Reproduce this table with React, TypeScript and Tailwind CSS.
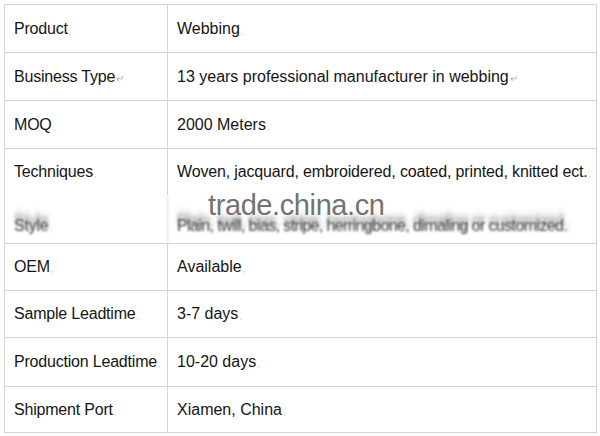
import React from "react";

type Row = { k: string; v: string; h: string; mk?: string; vmk?: string; noLine?: boolean; blur?: boolean };

const rows: Row[] = [
  { k: "Product", v: "Webbing", h: "h-[48px]" },
  { k: "Business Type", v: "13 years professional manufacturer in webbing", h: "h-[48px]", mk: "↵", vmk: "↵" },
  { k: "MOQ", v: "2000 Meters", h: "h-[48px]" },
  { k: "Techniques", v: "Woven, jacquard, embroidered, coated, printed, knitted ect.", h: "h-[47px]", noLine: true },
  { k: "Style", v: "Plain, twill, bias, stripe, herringbone, dimaling or customized.", h: "h-[48px]", blur: true },
  { k: "OEM", v: "Available", h: "h-[47px]" },
  { k: "Sample Leadtime", v: "3-7 days", h: "h-[47px]" },
  { k: "Production Leadtime", v: "10-20 days", h: "h-[49px]" },
  { k: "Shipment Port", v: "Xiamen, China", h: "h-[46px]" },
];

function Mark({ m }: { m?: string }) {
  if (m === "↵") return <span className="text-[10px] text-[#b5b5b5] ml-[1px] relative top-[2px]">↵</span>;
  return <span className="text-[9px] text-[#c4c4c4] ml-[1px] relative top-[3px]">,</span>;
}

const blurCls =
  "blur-[0.8px] text-[#3a3a3a] pt-[12px] [text-shadow:0_-5px_3px_rgba(90,90,90,0.55),0_-9px_4px_rgba(140,140,140,0.35)]";

export default function App() {
  return (
    <div className="w-[600px] h-[436px] bg-white pt-[4px] pl-[4px] font-['Liberation_Sans',Arial,sans-serif] text-[16px] text-[#151515]">
      <div className="relative w-[593px] border-t border-l border-r border-[#d3d3d3]">
        {rows.map((r, i) => (
          <div
            key={i}
            className={`flex ${r.h} ${r.noLine ? "border-b border-b-transparent" : "border-b border-[#d3d3d3]"}`}
          >
            <div className={`w-[163px] shrink-0 border-r border-[#d3d3d3] flex items-center pl-[9px] tracking-[-0.2px] ${r.blur ? blurCls : ""}`}>
              <span>{r.k}</span>
              <Mark m={r.mk} />
            </div>
            <div className={`flex-1 min-w-0 flex items-center pl-[9px] whitespace-nowrap overflow-hidden ${r.blur ? blurCls : ""}`}>
              <span className={i === 3 ? "tracking-[-0.15px]" : r.blur ? "tracking-[-0.6px]" : ""}>{r.v}</span>
              <Mark m={r.vmk} />
            </div>
          </div>
        ))}
        <div className="absolute left-[203px] top-[186px] text-[29px] leading-none text-[#737373] tracking-[-0.4px] [text-shadow:0_0_3px_#fff,0_0_6px_#fff]">
          trade.china.cn
        </div>
      </div>
    </div>
  );
}
